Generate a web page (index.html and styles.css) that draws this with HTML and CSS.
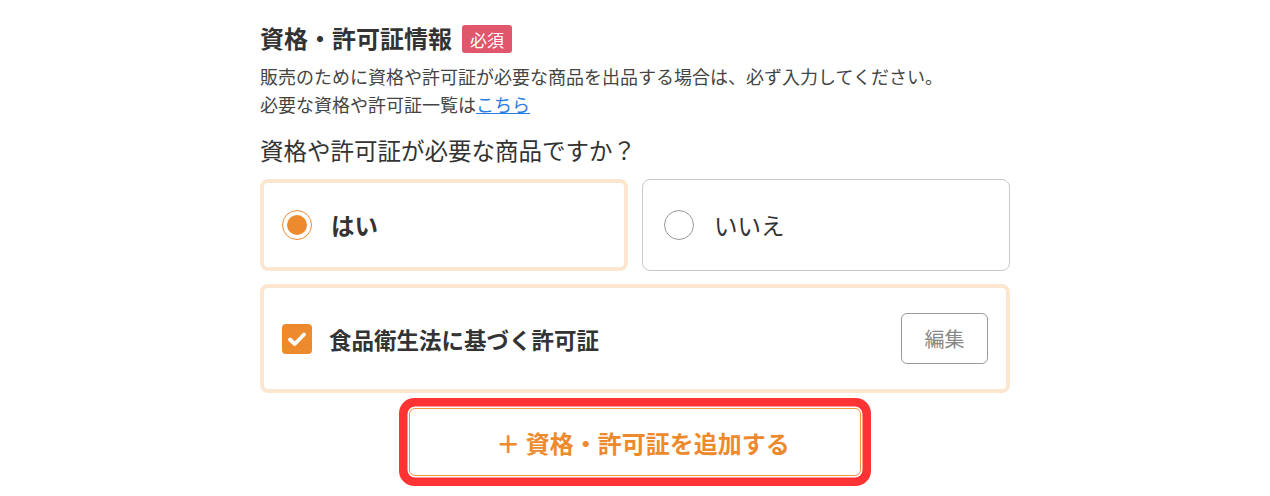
FILE: index.html
```html
<!DOCTYPE html>
<html lang="ja">
<head>
<meta charset="utf-8">
<link rel="stylesheet" href="styles.css">
</head>
<body>
<div class="wrap">
  <div class="head">
    <h2 class="title">資格・許可証情報</h2>
    <span class="badge">必須</span>
  </div>
  <p class="desc">販売のために資格や許可証が必要な商品を出品する場合は、必ず入力してください。<br>必要な資格や許可証一覧は<a class="link" href="#">こちら</a></p>
  <p class="question">資格や許可証が必要な商品ですか？</p>
  <div class="radios">
    <div class="card card-on">
      <span class="radio radio-on"><span class="dot"></span></span>
      <span class="rlabel bold">はい</span>
    </div>
    <div class="card card-off">
      <span class="radio"></span>
      <span class="rlabel">いいえ</span>
    </div>
  </div>
  <div class="item">
    <span class="check">
      <svg width="20" height="16" viewBox="0 0 20 16"><path d="M3 8.5 L7.8 13 L17 3.5" fill="none" stroke="#fff" stroke-width="3.8" stroke-linecap="round" stroke-linejoin="round"/></svg>
    </span>
    <span class="ilabel">食品衛生法に基づく許可証</span>
    <span class="edit">編集</span>
  </div>
  <div class="addrow">
    <button class="add">＋ 資格・許可証を追加する</button>
  </div>
</div>
</body>
</html>
```
FILE: styles.css
```css
* { box-sizing: border-box; }
body {
  margin: 0;
  background: #fff;
  font-family: "Noto Sans CJK JP", "Noto Sans", sans-serif;
  color: #333;
}
.wrap {
  width: 750px;
  margin: 0 auto;
  padding: 20px 0 20px;
}
.head {
  display: flex;
  align-items: center;
  gap: 10px;
  height: 36px;
}
.title {
  margin: 0;
  font-size: 24px;
  font-weight: 700;
  line-height: 36px;
  color: #333;
}
.badge {
  display: inline-flex;
  align-items: center;
  justify-content: center;
  width: 50px;
  height: 28px;
  background: #e0566a;
  color: #fff;
  border-radius: 3px;
  font-size: 17px;
  margin-top: 2px;
}
.desc {
  margin: 6px 0 0;
  font-size: 18px;
  line-height: 28px;
  color: #444;
}
.link {
  color: #2a7de1;
  text-decoration: underline;
}
.question {
  margin: 16px 0 0;
  font-size: 23.5px;
  line-height: 32px;
  color: #333;
}
.radios {
  margin-top: 13px;
  display: grid;
  grid-template-columns: 1fr 1fr;
  gap: 14px;
}
.card {
  height: 92px;
  border-radius: 8px;
  display: flex;
  align-items: center;
}
.card-on {
  border: 4px solid #fde6cf;
  padding-left: 18px;
  gap: 19px;
}
.card-off {
  border: 1px solid #c8c8c8;
  padding-left: 21px;
  gap: 20px;
}
.radio {
  width: 30px;
  height: 30px;
  border-radius: 50%;
  border: 1.5px solid #999;
  display: flex;
  align-items: center;
  justify-content: center;
  flex: none;
}
.radio-on {
  border-color: #ee8a2e;
}
.dot {
  width: 20px;
  height: 20px;
  border-radius: 50%;
  background: #ee8a2e;
}
.rlabel {
  font-size: 23.5px;
  color: #333;
}
.bold { font-weight: 700; }
.item {
  margin-top: 13px;
  height: 109px;
  border: 4px solid #fde6cf;
  border-radius: 8px;
  display: flex;
  align-items: center;
  padding: 0 18px;
}
.check {
  width: 30px;
  height: 30px;
  border-radius: 4px;
  background: #ee8a2e;
  display: flex;
  align-items: center;
  justify-content: center;
  flex: none;
}
.ilabel {
  margin-left: 17px;
  font-size: 22.5px;
  font-weight: 700;
  color: #333;
  flex: 1;
}
.edit {
  width: 87px;
  height: 51px;
  border: 1px solid #999;
  border-radius: 6px;
  display: flex;
  align-items: center;
  justify-content: center;
  font-size: 20px;
  color: #888;
}
.addrow {
  margin-top: 15px;
  display: flex;
  justify-content: center;
}
.add {
  width: 452px;
  height: 68px;
  background: #fff;
  border: 1.5px solid #f09540;
  border-radius: 6px;
  box-shadow: 0 0 0 1.5px #fff, 0 0 0 10px #ff3333;
  color: #ee8a2e;
  font-family: "Noto Sans CJK JP", "Noto Sans", sans-serif;
  font-size: 24px;
  font-weight: 700;
  padding: 0 0 0 16px;
}
```
